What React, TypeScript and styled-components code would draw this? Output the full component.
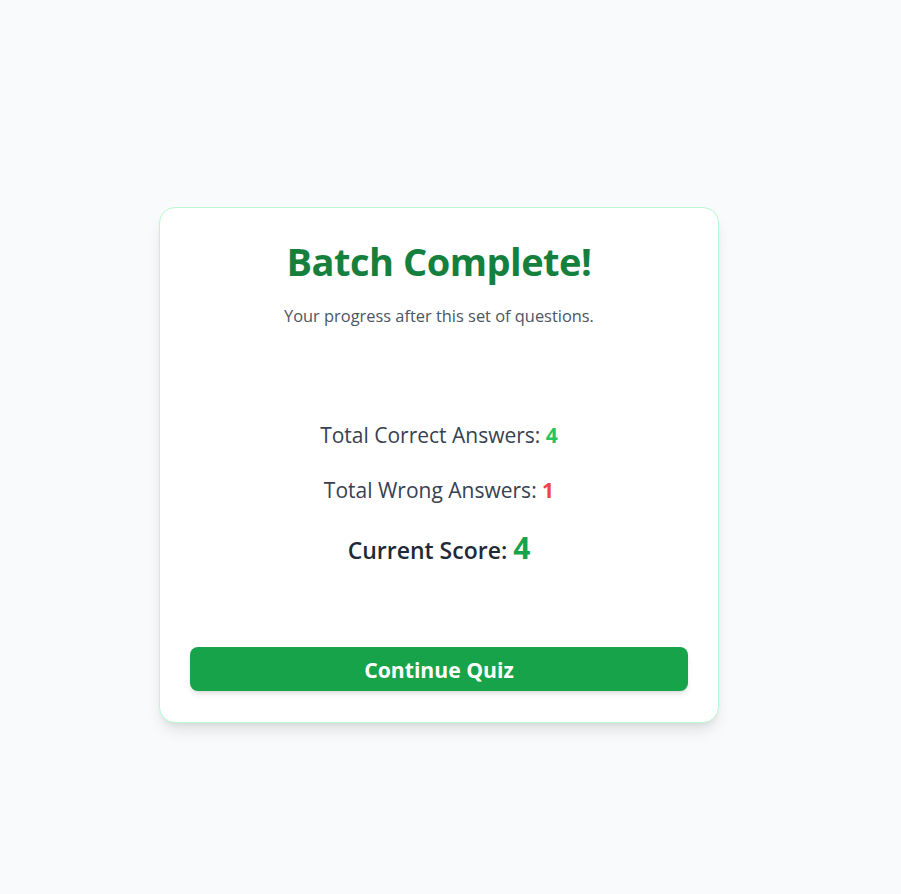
import React from "react";
import styled, { createGlobalStyle } from "styled-components";

const Global = createGlobalStyle`
  html, body { margin: 0; padding: 0; background: #f9fafb; }
  body { font-family: "Open Sans", "Noto Sans", sans-serif; }
  * { box-sizing: border-box; }
`;

const Page = styled.div`
  min-height: 100vh;
  padding: 36px 23px 0 0;
  display: flex;
  align-items: center;
  justify-content: center;
`;

const Card = styled.div`
  width: 560px;
  background: #ffffff;
  border: 1px solid #bbf7d0;
  border-radius: 16px;
  box-shadow: 0 10px 15px -3px rgba(0,0,0,0.1), 0 4px 6px -4px rgba(0,0,0,0.1);
  padding: 30px 30px 31px;
  display: flex;
  flex-direction: column;
  align-items: center;
  text-align: center;
`;

const Title = styled.h1`
  margin: 0;
  font-size: 38px;
  line-height: 46px;
  font-weight: 700;
  color: #15803d;
  letter-spacing: -0.5px;
`;

const Subtitle = styled.p`
  margin: 20px 0 0;
  font-size: 16.4px;
  line-height: 24px;
  color: #4b5563;
`;

const Stats = styled.div`
  margin-top: 93px;
  display: flex;
  flex-direction: column;
  align-items: center;
  gap: 27px;
`;

const StatLine = styled.p<{ $main?: boolean }>`
  margin: ${(p) => (p.$main ? "1px 0 0" : "0")};
  font-size: ${(p) => (p.$main ? "23px" : "21px")};
  line-height: ${(p) => (p.$main ? "32px" : "28px")};
  font-weight: ${(p) => (p.$main ? 600 : 400)};
  color: ${(p) => (p.$main ? "#1f2937" : "#374151")};
`;

const Value = styled.span<{ $color: string; $size?: string }>`
  font-weight: 700;
  color: ${(p) => p.$color};
  font-size: ${(p) => p.$size || "inherit"};
`;

const Button = styled.button`
  margin-top: 81px;
  width: 100%;
  height: 44px;
  border: none;
  border-radius: 8px;
  background: #16a34a;
  color: #ffffff;
  font-family: inherit;
  font-size: 21.2px;
  font-weight: 700;
  box-shadow: 0 4px 6px -1px rgba(0,0,0,0.1), 0 2px 4px -2px rgba(0,0,0,0.1);
  cursor: pointer;
`;

export default function App() {
  return (
    <>
      <Global />
      <Page>
        <Card>
          <Title>Batch Complete!</Title>
          <Subtitle>Your progress after this set of questions.</Subtitle>
          <Stats>
            <StatLine>
              Total Correct Answers: <Value $color="#22c55e">4</Value>
            </StatLine>
            <StatLine>
              Total Wrong Answers: <Value $color="#ef4444">1</Value>
            </StatLine>
            <StatLine $main>
              Current Score: <Value $color="#16a34a" $size="30px">4</Value>
            </StatLine>
          </Stats>
          <Button>Continue Quiz</Button>
        </Card>
      </Page>
    </>
  );
}
